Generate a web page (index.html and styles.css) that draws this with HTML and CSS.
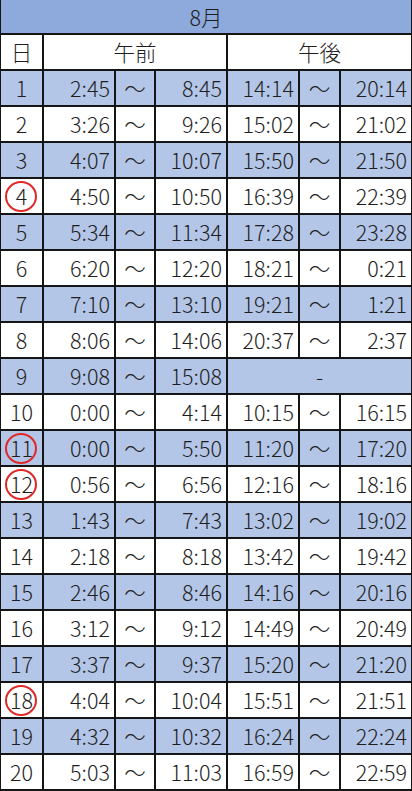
FILE: index.html
```html
<!DOCTYPE html>
<html lang="ja">
<head>
<meta charset="utf-8">
<link rel="stylesheet" href="styles.css">
</head>
<body>
<table class="tt">
<colgroup>
<col class="c-day"><col class="c-t"><col class="c-w"><col class="c-t"><col class="c-t"><col class="c-w2"><col class="c-t">
</colgroup>
<thead>
<tr class="hd"><th colspan="7">8月</th></tr>
<tr class="sub"><th>日</th><th colspan="3">午前</th><th colspan="3">午後</th></tr>
</thead>
<tbody>
<tr class="b"><td class="d">1</td><td class="r">2:45</td><td class="w">～</td><td class="r">8:45</td><td class="r">14:14</td><td class="w">～</td><td class="r">20:14</td></tr>
<tr><td class="d">2</td><td class="r">3:26</td><td class="w">～</td><td class="r">9:26</td><td class="r">15:02</td><td class="w">～</td><td class="r">21:02</td></tr>
<tr class="b"><td class="d">3</td><td class="r">4:07</td><td class="w">～</td><td class="r">10:07</td><td class="r">15:50</td><td class="w">～</td><td class="r">21:50</td></tr>
<tr><td class="d"><span class="mk">4</span></td><td class="r">4:50</td><td class="w">～</td><td class="r">10:50</td><td class="r">16:39</td><td class="w">～</td><td class="r">22:39</td></tr>
<tr class="b"><td class="d">5</td><td class="r">5:34</td><td class="w">～</td><td class="r">11:34</td><td class="r">17:28</td><td class="w">～</td><td class="r">23:28</td></tr>
<tr><td class="d">6</td><td class="r">6:20</td><td class="w">～</td><td class="r">12:20</td><td class="r">18:21</td><td class="w">～</td><td class="r">0:21</td></tr>
<tr class="b"><td class="d">7</td><td class="r">7:10</td><td class="w">～</td><td class="r">13:10</td><td class="r">19:21</td><td class="w">～</td><td class="r">1:21</td></tr>
<tr><td class="d">8</td><td class="r">8:06</td><td class="w">～</td><td class="r">14:06</td><td class="r">20:37</td><td class="w">～</td><td class="r">2:37</td></tr>
<tr class="b"><td class="d">9</td><td class="r">9:08</td><td class="w">～</td><td class="r">15:08</td><td class="w" colspan="3">-</td></tr>
<tr><td class="d">10</td><td class="r">0:00</td><td class="w">～</td><td class="r">4:14</td><td class="r">10:15</td><td class="w">～</td><td class="r">16:15</td></tr>
<tr class="b"><td class="d"><span class="mk">11</span></td><td class="r">0:00</td><td class="w">～</td><td class="r">5:50</td><td class="r">11:20</td><td class="w">～</td><td class="r">17:20</td></tr>
<tr><td class="d"><span class="mk">12</span></td><td class="r">0:56</td><td class="w">～</td><td class="r">6:56</td><td class="r">12:16</td><td class="w">～</td><td class="r">18:16</td></tr>
<tr class="b"><td class="d">13</td><td class="r">1:43</td><td class="w">～</td><td class="r">7:43</td><td class="r">13:02</td><td class="w">～</td><td class="r">19:02</td></tr>
<tr><td class="d">14</td><td class="r">2:18</td><td class="w">～</td><td class="r">8:18</td><td class="r">13:42</td><td class="w">～</td><td class="r">19:42</td></tr>
<tr class="b"><td class="d">15</td><td class="r">2:46</td><td class="w">～</td><td class="r">8:46</td><td class="r">14:16</td><td class="w">～</td><td class="r">20:16</td></tr>
<tr><td class="d">16</td><td class="r">3:12</td><td class="w">～</td><td class="r">9:12</td><td class="r">14:49</td><td class="w">～</td><td class="r">20:49</td></tr>
<tr class="b"><td class="d">17</td><td class="r">3:37</td><td class="w">～</td><td class="r">9:37</td><td class="r">15:20</td><td class="w">～</td><td class="r">21:20</td></tr>
<tr><td class="d"><span class="mk">18</span></td><td class="r">4:04</td><td class="w">～</td><td class="r">10:04</td><td class="r">15:51</td><td class="w">～</td><td class="r">21:51</td></tr>
<tr class="b"><td class="d">19</td><td class="r">4:32</td><td class="w">～</td><td class="r">10:32</td><td class="r">16:24</td><td class="w">～</td><td class="r">22:24</td></tr>
<tr><td class="d">20</td><td class="r">5:03</td><td class="w">～</td><td class="r">11:03</td><td class="r">16:59</td><td class="w">～</td><td class="r">22:59</td></tr>
</tbody>
</table>
</body>
</html>
```
FILE: styles.css
```css
html, body {
  margin: 0;
  padding: 0;
  background: #ffffff;
  overflow: hidden;
}
.tt {
  border-collapse: collapse;
  table-layout: fixed;
  width: 413px;
  margin-left: -1px;
  font-family: "Noto Sans CJK JP", "Noto Sans", sans-serif;
  font-size: 21.5px;
  font-weight: 300;
  color: #1e1e1e;
}
.c-day { width: 43px; }
.c-t { width: 72px; }
.c-w { width: 40px; }
.c-w2 { width: 41px; }
.tt th, .tt td {
  border: 2px solid #151515;
  padding: 0 4px 0 0;
  height: 36px;
  box-sizing: border-box;
  font-weight: 300;
  line-height: 1;
  white-space: nowrap;
  overflow: visible;
}
.tt th { text-align: center; padding: 0; }
.hd th {
  background: #8ea9db;
  height: 34px;
  border-top: none;
}
.sub th { background: #ffffff; }
.b td { background: #b4c6e7; }
.d { text-align: center; padding: 0 !important; position: relative; }
.r { text-align: right; }
.w { text-align: center; padding: 0 !important; }
.mk { position: relative; display: inline-block; }
.mk::after {
  content: "";
  position: absolute;
  left: 50%;
  top: 50%;
  width: 32px;
  height: 31px;
  margin-left: -16px;
  margin-top: -15px;
  border: 2px solid #e02828;
  border-radius: 50%;
  box-sizing: border-box;
}
```
